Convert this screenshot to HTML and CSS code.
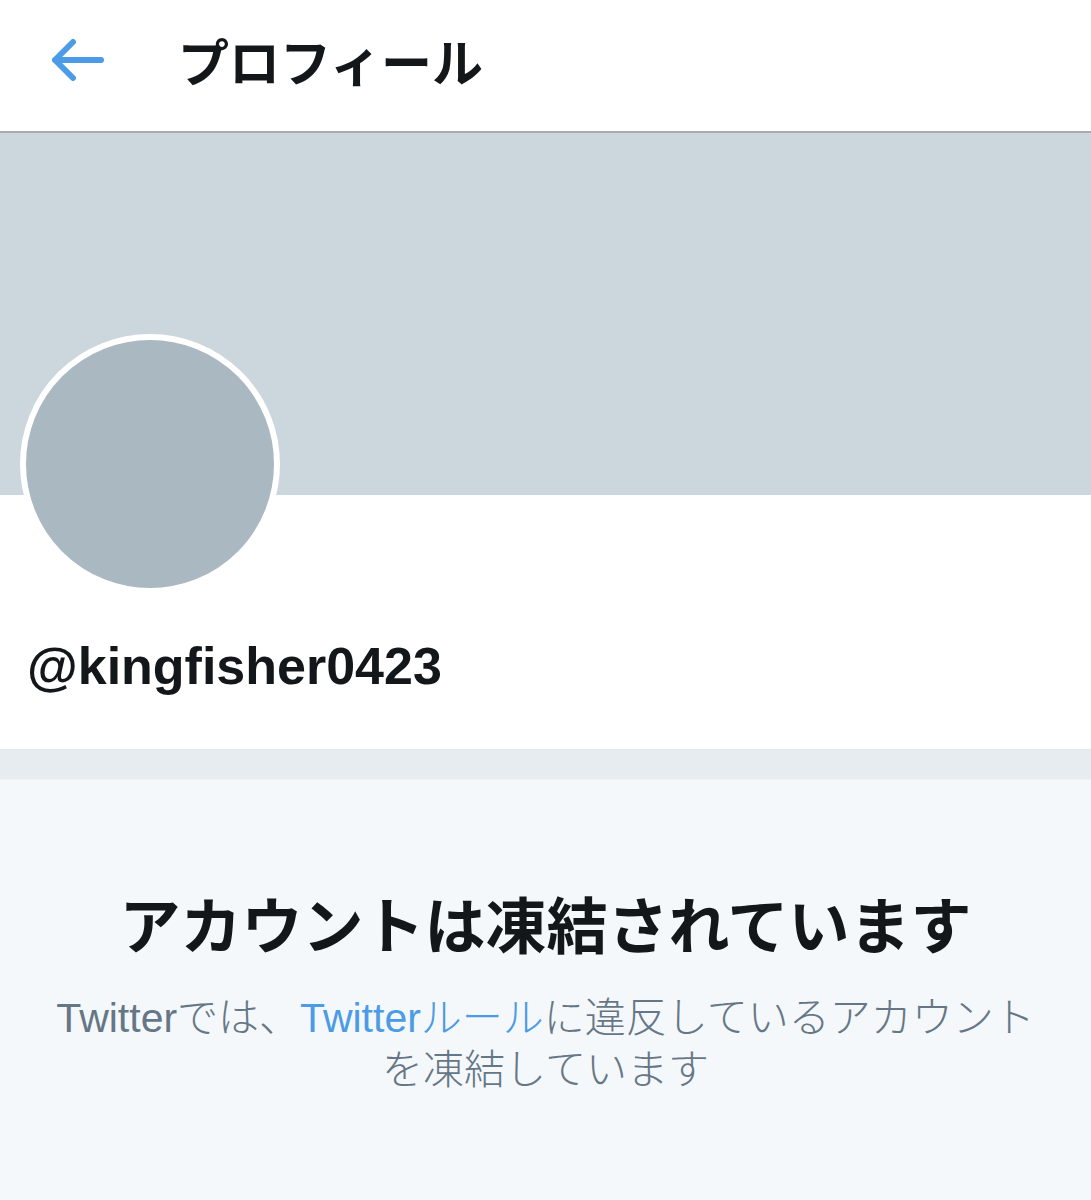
FILE: index.html
```html
<!DOCTYPE html>
<html lang="ja">
<head>
  <meta charset="UTF-8" />
  <meta name="viewport" content="width=device-width, initial-scale=1.0"/>
  <title>プロフィール</title>
  <link rel="stylesheet" href="styles.css">
</head>
<body>
  <!-- Cabecera -->
  <header class="topbar">
    <a class="back" href="#" aria-label="戻る">
      <svg width="54" height="44" viewBox="0 0 54 44" aria-hidden="true">
        <path d="M4 22 H50 M4 22 L22 4 M4 22 L22 40" fill="none" stroke="#4b9be6" stroke-width="6" stroke-linecap="round" stroke-linejoin="round"/>
      </svg>
    </a>
    <h1 class="title">プロフィール</h1>
  </header>

  <div class="banner"></div>

  <section class="profile">
    <div class="avatar"></div>
    <div class="handle">@kingfisher0423</div>
  </section>

  <div class="divider"></div>

  <!-- Cuenta suspendida -->
  <section class="suspended">
    <h2>アカウントは凍結されています</h2>
    <p>Twitterでは、<a href="#">Twitterルール</a>に違反しているアカウントを凍結しています</p>
  </section>
</body>
</html>
```

FILE: styles.css
```css
* {
  box-sizing: border-box;
}
body {
  margin: 0;
  background: #f5f8fa;
  font-family: 'Liberation Sans', 'Noto Sans CJK JP', sans-serif;
  color: #14171a;
}
a {
  text-decoration: none;
}

.topbar {
  height: 133px;
  display: flex;
  align-items: center;
  padding: 0 0 11px 51px;
  background: #fff;
  border-bottom: 2px solid #ababab;
}
.back {
  display: flex;
  width: 54px;
  height: 44px;
}
.title {
  margin: 0 0 0 73px;
  font-family: 'Noto Sans CJK JP', sans-serif;
  font-size: 51px;
  font-weight: 700;
  line-height: 1;
  color: #14171a;
}

.banner {
  height: 362px;
  background: #ccd6dd;
}

.profile {
  display: flex;
  flex-direction: column;
  background: #fff;
  padding: 0 0 53px 20px;
}
.avatar {
  width: 260px;
  height: 260px;
  margin-top: -161px;
  border-radius: 50%;
  background: #aab8c2;
  border: 6px solid #fff;
}
.handle {
  margin: 42px 0 0 7px;
  font-size: 52px;
  font-weight: 700;
  line-height: 60px;
  color: #14171a;
}

.divider {
  height: 31px;
  background: #e6ecf0;
  border-top: 1px solid #e1e7ec;
  border-bottom: 1px solid #edf2f6;
}

.suspended {
  padding: 107px 0 100px;
  text-align: center;
}
.suspended h2 {
  margin: 0;
  font-family: 'Noto Sans CJK JP', sans-serif;
  font-size: 61px;
  font-weight: 700;
  line-height: 72px;
  color: #14171a;
}
.suspended p {
  max-width: 1000px;
  margin: 33px auto 0;
  font-size: 41px;
  font-weight: 300;
  line-height: 52px;
  color: #657786;
}
.suspended p a {
  color: #4b9be6;
}
```
